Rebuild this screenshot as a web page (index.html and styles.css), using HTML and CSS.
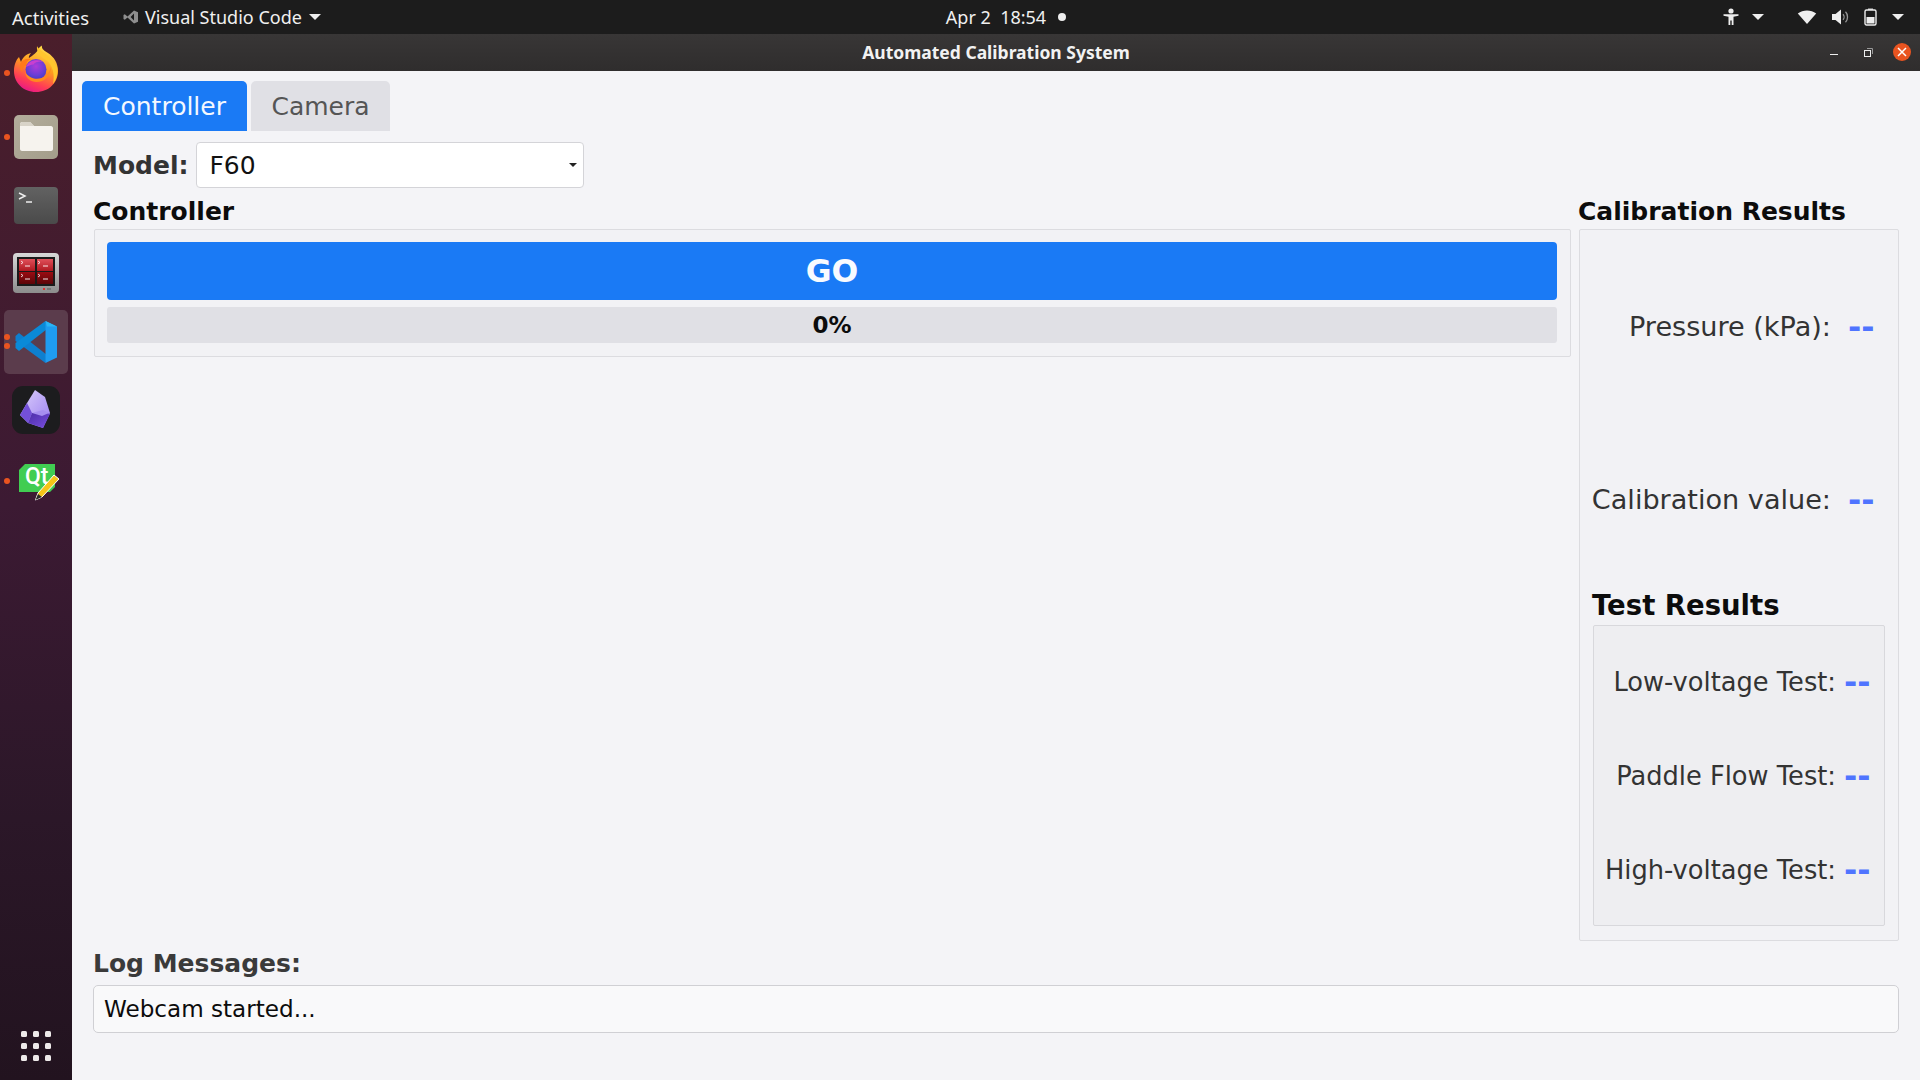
FILE: index.html
```html
<!DOCTYPE html>
<html lang="en">
<head>
<meta charset="utf-8">
<title>Automated Calibration System</title>
<link rel="stylesheet" href="styles.css">
</head>
<body>
<header class="topbar">
  <div class="top-left">
    <span class="activities">Activities</span>
    <span class="appmenu">
      <svg class="app-ico" width="16" height="14" viewBox="0 0 16 14"><path d="M11 0.5 15 2.2V11.8L11 13.5 4.5 7.6 1.8 9.7 0.5 9V5L1.8 4.3 4.5 6.4ZM11 3.6 7.6 7 11 10.4Z" fill="#8e8e8e"/></svg>
      <span>Visual Studio Code</span>
      <i class="caret"></i>
    </span>
  </div>
  <div class="clock"><span>Apr 2&nbsp; 18:54</span><i class="clock-dot"></i></div>
  <div class="top-right">
    <svg class="tray-a11y" width="16" height="18" viewBox="0 0 16 18"><circle cx="8" cy="3" r="2.600" fill="#eee"/><path d="M0.500 6.200H15.500V7.800L10.500 8.800V17H8.700V12.500H7.300V17H5.500V8.800L0.500 7.800Z" fill="#eee"/></svg>
    <i class="caret caret-a"></i>
    <svg class="tray-wifi" width="20" height="16" viewBox="0 0 20 16"><path d="M10 15 0.800 4.600C6 .4 14 .4 19.200 4.600Z" fill="#eee"/></svg>
    <svg class="tray-vol" width="18" height="16" viewBox="0 0 18 16"><path d="M0 5H3.500L9 .5V15.500L3.500 11H0Z" fill="#eee"/><path d="M11 5.200C12.400 6.700 12.400 9.300 11 10.800M13.500 2.800C16.200 5.500 16.200 10.500 13.500 13.200" fill="none" stroke="#9a9a9a" stroke-width="1.300"/></svg>
    <svg class="tray-bat" width="13" height="18" viewBox="0 0 13 18"><path d="M4 .5H9V2H4Z" fill="#ccc"/><rect x="1" y="2" width="11" height="15" rx="1.500" fill="none" stroke="#eee" stroke-width="1.400"/><rect x="2.500" y="9" width="8" height="6.500" fill="#eee"/></svg>
    <i class="caret caret-b"></i>
  </div>
</header>
<div class="desktop">
  <nav class="dock">
    <div class="dock-item item-firefox">
      <i class="run-dot"></i>
      <svg width="46" height="48" viewBox="0 0 46 48">
        <defs>
          <linearGradient id="ffa" x1="0.700" y1="0" x2="0.300" y2="1"><stop offset="0" stop-color="#ffe34d"/><stop offset=".45" stop-color="#ff9a1f"/><stop offset=".78" stop-color="#ff3d55"/><stop offset="1" stop-color="#e6168a"/></linearGradient>
          <radialGradient id="ffb" cx=".5" cy=".35" r=".7"><stop offset="0" stop-color="#b03ad8"/><stop offset=".6" stop-color="#6a3ed6"/><stop offset="1" stop-color="#3f3cc0"/></radialGradient>
        </defs>
        <path d="M23 47C10 47 1 37.500 1 26 1 20 3 15 6 12L8 17C10 11.500 14 9 18 8 16 10.500 15.500 12 16 13 20 10 24 8 26 3 27 1.500 29 .5 29 .5 28 4 32 6 35 8 41 12 45 18 45 26 45 37.500 36 47 23 47Z" fill="url(#ffa)"/>
        <path d="M24 1C26 6 37 9 44 22 45 28 44 34 40 39 42 30 40 20 33 15 28 12 23 7 24 1Z" fill="#ffc62e"/>
        <path d="M7 19C9 15 13 13 18 14 14 16 13 18 14 20 11 21 9 24 9 27 7 25 6.500 22 7 19Z" fill="#ff7a1a"/>
        <circle cx="23" cy="24.500" r="10.500" fill="url(#ffb)"/>
        <path d="M13 22C15 16 23 13.500 30 16.500 26 16 21.500 17 20.500 19.500 18 19.500 15 21 13 22Z" fill="#c93fd0"/>
        <path d="M12 27C13 35 21 39 29 36 35 33.500 38 28 38 22 36 30 29 35 21 33.500 17 32.500 14 30 12 27Z" fill="#ff8a1e"/>
      </svg>
    </div>
    <div class="dock-item item-files">
      <i class="run-dot"></i>
      <svg width="44" height="44" viewBox="0 0 44 44">
        <defs><linearGradient id="fa" x1="0" y1="0" x2="1" y2="1"><stop offset="0" stop-color="#b3ad9c"/><stop offset="1" stop-color="#a39d8a"/></linearGradient></defs>
        <rect width="44" height="44" rx="5" fill="url(#fa)"/>
        <path d="M6 9C6 8 7 7 8 7H16L20 11H37C38 11 39 12 39 13V34C39 35 38 36 37 36H8C7 36 6 35 6 34Z" fill="#f6f3ee"/>
        <path d="M6 9C6 8 7 7 8 7H16L20 11H6Z" fill="#d8d3c8"/>
      </svg>
    </div>
    <div class="dock-item item-term">
      <svg width="44" height="37" viewBox="0 0 44 37">
        <defs><linearGradient id="tg" x1="0" y1="0" x2="0" y2="1"><stop offset="0" stop-color="#626262"/><stop offset="1" stop-color="#4a4a4a"/></linearGradient></defs>
        <rect width="44" height="37" rx="4" fill="url(#tg)"/>
        <path d="M5 6 11 9 5 12" fill="none" stroke="#eee" stroke-width="1.500"/>
        <path d="M12 15H18" stroke="#eee" stroke-width="1.500"/>
      </svg>
    </div>
    <div class="dock-item item-tilix">
      <svg width="46" height="40" viewBox="0 0 46 40">
        <defs>
          <linearGradient id="ta" x1="0" y1="0" x2="0" y2="1"><stop offset="0" stop-color="#d8d8d8"/><stop offset="1" stop-color="#8c8c8c"/></linearGradient>
          <linearGradient id="tb" x1="0" y1="0" x2="0" y2="1"><stop offset="0" stop-color="#e0505a"/><stop offset="1" stop-color="#b01820"/></linearGradient>
          <linearGradient id="tc" x1="0" y1="0" x2="0" y2="1"><stop offset="0" stop-color="#9a0c12"/><stop offset="1" stop-color="#5c0508"/></linearGradient>
        </defs>
        <rect width="46" height="40" rx="4" fill="url(#ta)"/>
        <rect x="4" y="4" width="38" height="29" fill="#1a1a1a"/>
        <rect x="6" y="6" width="16" height="12" fill="url(#tb)"/><rect x="24" y="6" width="16" height="12" fill="url(#tb)"/>
        <rect x="6" y="19" width="16" height="12" fill="url(#tc)"/><rect x="24" y="19" width="16" height="12" fill="url(#tc)"/>
        <path d="M8 8 10 9.500 8 11M25 8 27 9.500 25 11M8 21 10 22.500 8 24M25 21 27 22.500 25 24" fill="none" stroke="#fff" stroke-width=".8"/>
        <path d="M12 13H17M30 13H35M12 26H17M30 26H35" stroke="#fff" stroke-width=".9"/>
        <rect x="30" y="35" width="2" height="2" fill="#d33"/><rect x="34" y="35" width="4" height="2" fill="#777"/>
      </svg>
    </div>
    <div class="dock-item item-code">
      <i class="run-dot dot-a"></i><i class="run-dot dot-b"></i>
      <svg width="44" height="44" viewBox="0 0 44 44">
        <path d="M1.500 16 5 13 33 35 31.500 43 1.500 21Z" fill="#0e7fcf"/>
        <path d="M1.500 28 5 31 33 9 31.500 1 1.500 23Z" fill="#0a8ad8"/>
        <path d="M31.500 1 43 6.500V37.500L31.500 43Z" fill="#1f9cf0"/>
        <path d="M31.500 1 43 6.500H33Z" fill="#29b6f6"/>
      </svg>
    </div>
    <div class="dock-item item-obs">
      <svg width="48" height="48" viewBox="0 0 48 48">
        <defs>
          <linearGradient id="oa" x1="0" y1="0" x2="1" y2="1"><stop offset="0" stop-color="#dccffb"/><stop offset="1" stop-color="#9a7ef0"/></linearGradient>
          <linearGradient id="ob" x1="0" y1="0" x2="1" y2="1"><stop offset="0" stop-color="#4c2ea8"/><stop offset="1" stop-color="#7a4ee0"/></linearGradient>
        </defs>
        <rect width="48" height="48" rx="11" fill="#1c1c1e"/>
        <path d="M23 4 33 11 38 27 31 42 16 37 8 29 15 17Z" fill="url(#oa)"/>
        <path d="M8 29 15 17 20 27 16 37Z" fill="#7350d8"/>
        <path d="M20 27 35 27 38 28 31 42 16 37Z" fill="url(#ob)"/>
        <path d="M20 27 31 24 37 27 30 30Z" fill="#a68ef0"/>
      </svg>
    </div>
    <div class="dock-item item-qt">
      <i class="run-dot"></i>
      <svg width="44" height="40" viewBox="0 0 44 40">
        <path d="M8 1H38V24L33 29H2V7Z" fill="#41cd52"/>
        <text class="qt-text" x="8" y="21">Qt</text>
        <path d="M18.500 37 21 30 37 12 42 16 25 34Z" fill="#f5c518" stroke="#fff" stroke-width="1"/>
        <path d="M18.500 37 21 31 25 34Z" fill="#2b2b2b"/>
      </svg>
    </div>
    <div class="apps-grid">
      <i></i><i></i><i></i><i></i><i></i><i></i><i></i><i></i><i></i>
    </div>
  </nav>
  <main class="window">
    <div class="titlebar">
      <span class="title">Automated Calibration System</span>
      <div class="win-controls">
        <i class="win-min"></i>
        <svg class="win-max" width="9" height="9" viewBox="0 0 9 9"><rect x=".5" y="2.500" width="6" height="6" fill="none" stroke="#eee"/><path d="M3 .5H8.500V6" fill="none" stroke="#999"/></svg>
        <i class="win-close"><svg width="10" height="10" viewBox="0 0 10 10"><path d="M1 1 9 9M9 1 1 9" stroke="#fff" stroke-width="1.500"/></svg></i>
      </div>
    </div>
    <div class="content">
      <div class="tabs">
        <div class="tab tab-active">Controller</div>
        <div class="tab">Camera</div>
      </div>
      <div class="model-row">
        <span class="model-label">Model:</span>
        <div class="combo"><span>F60</span><i class="combo-caret"></i></div>
      </div>
      <div class="columns">
        <section class="col-left">
          <h2 class="heading">Controller</h2>
          <div class="ctrl-box">
            <div class="go">GO</div>
            <div class="progress">0%</div>
          </div>
        </section>
        <section class="col-right">
          <h2 class="heading">Calibration Results</h2>
          <div class="cal-box">
            <div class="res-row"><span>Pressure (kPa):</span><b>--</b></div>
            <div class="res-row"><span>Calibration value:</span><b>--</b></div>
            <h2 class="heading test-heading">Test Results</h2>
            <div class="test-box">
              <div class="test-row"><span>Low-voltage Test:</span><b>--</b></div>
              <div class="test-row"><span>Paddle Flow Test:</span><b>--</b></div>
              <div class="test-row"><span>High-voltage Test:</span><b>--</b></div>
            </div>
          </div>
        </section>
      </div>
      <div class="log-label">Log Messages:</div>
      <div class="log">Webcam started...</div>
    </div>
  </main>
</div>
</body>
</html>
```
FILE: styles.css
```css
* { box-sizing: border-box; }
html, body { margin: 0; height: 100%; }
body { display: flex; flex-direction: column; height: 1080px; overflow: hidden; background: #f4f4f7; font-family: "DejaVu Sans", sans-serif; }
i { display: block; font-style: normal; }

.topbar { height: 34px; flex: none; background: #1c1c1c; color: #f0f0f0; font: 400 18px "Noto Sans", sans-serif; display: grid; grid-template-columns: 1fr auto 1fr; align-items: center; }
.top-left { display: flex; align-items: center; padding-left: 12px; }
.activities { width: 111px; font-size: 18.500px; }
.appmenu { display: flex; align-items: center; gap: 6px; }
.caret { width: 0; height: 0; border-left: 6px solid transparent; border-right: 6px solid transparent; border-top: 6px solid #eee; }
.appmenu .caret { margin-left: 1px; }
.clock { display: flex; align-items: center; gap: 12px; padding-left: 92px; }
.clock-dot { width: 8px; height: 8px; border-radius: 50%; background: #eee; }
.top-right { display: flex; align-items: center; justify-content: flex-end; padding-right: 16px; }
.tray-a11y { margin-right: 13px; }
.caret-a { margin-right: 33px; }
.tray-wifi { margin-right: 15px; }
.tray-vol { margin-right: 14px; }
.tray-bat { margin-right: 15px; }

.desktop { flex: 1; display: flex; min-height: 0; }
.dock { width: 72px; flex: none; position: relative; display: flex; flex-direction: column; align-items: center; background: linear-gradient(#4a1e2b, #3c1a33 45%, #2b1728 75%, #22131f); }
.dock-item { position: relative; display: flex; justify-content: center; }
.dock-item svg { display: block; }
.run-dot { position: absolute; left: 4px; width: 6px; height: 6px; border-radius: 50%; background: #e95420; }
.item-firefox { width: 72px; margin-top: 11px; }
.item-firefox .run-dot { top: 25px; }
.item-files { width: 72px; margin-top: 22px; }
.item-files .run-dot { top: 19px; }
.item-term { width: 72px; margin-top: 28px; }
.item-tilix { width: 72px; margin-top: 29px; }
.item-code { width: 64px; height: 64px; margin-top: 17px; padding-top: 10px; background: #5b3c4c; border-radius: 5px; }
.item-code .run-dot { left: 0; }
.dot-a { top: 24px; }
.dot-b { top: 33px; }
.item-obs { width: 72px; margin-top: 12px; }
.item-qt { width: 72px; margin-top: 29px; }
.item-qt svg { margin-left: 5px; }
.item-qt .run-dot { top: 15px; }
.qt-text { font: 500 23px Roboto, sans-serif; fill: #fff; }
.apps-grid { position: absolute; bottom: 19px; left: 21px; display: grid; grid-template-columns: repeat(3, 6px); gap: 6px; }
.apps-grid i { width: 6px; height: 6px; border-radius: 1.500px; background: #eeeaea; }

.window { flex: 1; min-width: 0; display: flex; flex-direction: column; }
.titlebar { position: relative; height: 37px; flex: none; background: linear-gradient(#383636, #2f2d2d); color: #f2f2f2; display: flex; align-items: center; justify-content: center; padding-bottom: 2px; font: 700 17.500px "Noto Sans", sans-serif; }
.win-controls { position: absolute; right: 9px; top: 9px; display: flex; align-items: center; }
.win-min { width: 8px; height: 1px; background: #eee; margin-top: 4px; margin-right: 26px; }
.win-max { display: block; margin-right: 20px; }
.win-close { width: 18px; height: 18px; border-radius: 50%; background: #e95420; display: flex; align-items: center; justify-content: center; }

.content { flex: 1; display: flex; flex-direction: column; padding: 10px 21px 0 10px; min-height: 0; }
.tabs { display: flex; gap: 4px; height: 50px; flex: none; font-size: 25px; }
.tab { display: flex; align-items: center; justify-content: center; width: 139px; background: #e0e0e5; color: #555; border-radius: 5px 5px 0 0; }
.tab-active { width: 165px; background: #1a7af5; color: #f4f8ff; }
.model-row { display: flex; align-items: center; gap: 8px; margin: 11px 0 0 11px; height: 46px; flex: none; }
.model-label { font-size: 25px; font-weight: 700; color: #333; }
.combo { position: relative; width: 388px; height: 46px; background: #fff; border: 1px solid #d4d4d8; border-radius: 4px; display: flex; align-items: center; padding-left: 12px; font-size: 25px; color: #111; }
.combo-caret { position: absolute; right: 6px; top: 20px; width: 0; height: 0; border-left: 4px solid transparent; border-right: 4px solid transparent; border-top: 4px solid #222; }

.columns { display: flex; gap: 8px; margin-left: 12px; flex: none; height: 744px; margin-top: 9px; }
.heading { margin: 0 0 0 -1px; font-size: 25px; font-weight: 700; color: #0c0c0c; line-height: 30px; padding-bottom: 2px; }
.col-left { width: 1477px; flex: none; }
.col-right { flex: 1; min-width: 0; }
.ctrl-box { height: 128px; border: 1px solid #dcdce0; border-radius: 2px; background: #f2f2f5; padding: 12px 13px 12px 12px; }
.go { height: 58px; border-radius: 4px; background: #1a7af5; color: #f8fbff; font-size: 31.500px; font-weight: 700; display: flex; align-items: center; justify-content: center; }
.progress { margin-top: 7px; height: 36px; border-radius: 3px; background: #e0e0e5; color: #0c0c0c; font-size: 23px; font-weight: 700; display: flex; align-items: center; justify-content: center; }
.cal-box { height: 712px; border: 1px solid #dcdce0; border-radius: 2px; background: #f2f2f5; padding: 10px 13px 0; }
.res-row { height: 173px; display: flex; align-items: center; justify-content: flex-end; gap: 17px; padding-right: 11px; font-size: 27.100px; color: #333; white-space: nowrap; }
.res-row b, .test-row b { color: #4f74ff; width: 26px; font-size: 32px; white-space: nowrap; flex: none; }
.test-heading { font-size: 27.500px; line-height: 39px; padding: 0; margin-left: -1px; }
.test-box { height: 301px; border: 1px solid #d8d8dc; border-radius: 2px; background: #eeeef1; padding: 9px 0; }
.test-row { height: 94px; display: flex; align-items: center; justify-content: flex-end; gap: 8px; padding-right: 14px; font-size: 25.700px; color: #333; white-space: nowrap; }
.log-label { margin: 5px 0 0 11px; font-size: 25px; font-weight: 700; color: #3a3a3a; line-height: 36px; flex: none; }
.log { margin: 3px 0 0 11px; height: 48px; border: 1px solid #d0d0d4; border-radius: 5px; background: #f9f9fa; display: flex; align-items: center; padding-left: 10px; font-size: 23.100px; color: #0c0c0c; flex: none; }
```
